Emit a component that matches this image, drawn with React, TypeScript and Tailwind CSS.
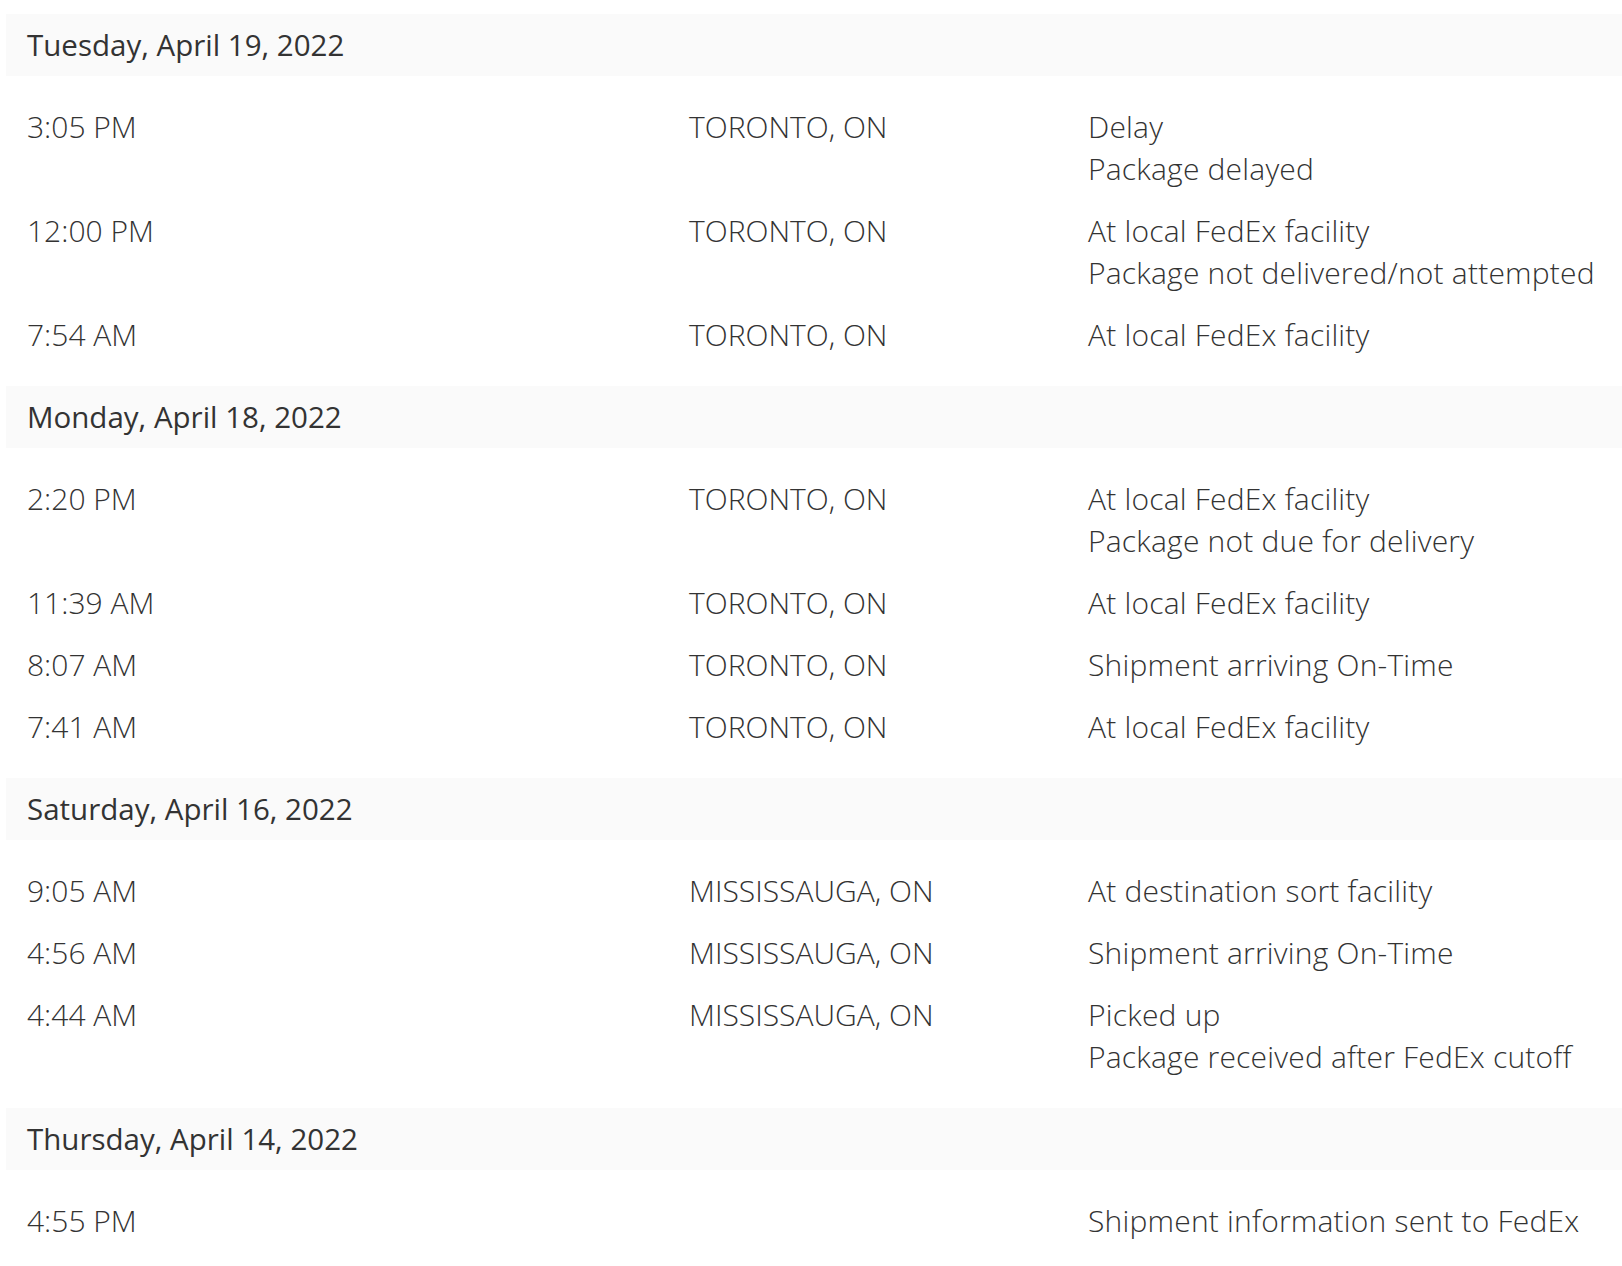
const DAYS = [
  {
    date: 'Tuesday, April 19, 2022',
    events: [
      { time: '3:05 PM', place: 'TORONTO, ON', status: 'Delay', note: 'Package delayed' },
      { time: '12:00 PM', place: 'TORONTO, ON', status: 'At local FedEx facility', note: 'Package not delivered/not attempted' },
      { time: '7:54 AM', place: 'TORONTO, ON', status: 'At local FedEx facility' },
    ],
  },
  {
    date: 'Monday, April 18, 2022',
    events: [
      { time: '2:20 PM', place: 'TORONTO, ON', status: 'At local FedEx facility', note: 'Package not due for delivery' },
      { time: '11:39 AM', place: 'TORONTO, ON', status: 'At local FedEx facility' },
      { time: '8:07 AM', place: 'TORONTO, ON', status: 'Shipment arriving On-Time' },
      { time: '7:41 AM', place: 'TORONTO, ON', status: 'At local FedEx facility' },
    ],
  },
  {
    date: 'Saturday, April 16, 2022',
    events: [
      { time: '9:05 AM', place: 'MISSISSAUGA, ON', status: 'At destination sort facility' },
      { time: '4:56 AM', place: 'MISSISSAUGA, ON', status: 'Shipment arriving On-Time' },
      { time: '4:44 AM', place: 'MISSISSAUGA, ON', status: 'Picked up', note: 'Package received after FedEx cutoff' },
    ],
  },
  {
    date: 'Thursday, April 14, 2022',
    events: [
      { time: '4:55 PM', place: '', status: 'Shipment information sent to FedEx' },
    ],
  },
];

export default function App() {
  return (
    <div className="min-h-screen bg-white pt-[14px] pl-[6px] text-[#333333] font-['Open_Sans',sans-serif]">
      {DAYS.map((day) => (
        <section key={day.date}>
          <div className="flex h-[62px] items-center bg-[#fafafa] pl-[21px] text-[29.5px] font-normal">
            {day.date}
          </div>
          <div className="py-5">
            {day.events.map((ev) => (
              <div key={ev.time} className="flex py-[10px] text-[30px] font-light leading-[42px]">
                <div className="w-[683px] shrink-0 pl-[21px]">{ev.time}</div>
                <div className="w-[399px] shrink-0">{ev.place}</div>
                <div className="flex flex-col tracking-[0.2px]">
                  <span>{ev.status}</span>
                  {ev.note && <span>{ev.note}</span>}
                </div>
              </div>
            ))}
          </div>
        </section>
      ))}
    </div>
  );
}
